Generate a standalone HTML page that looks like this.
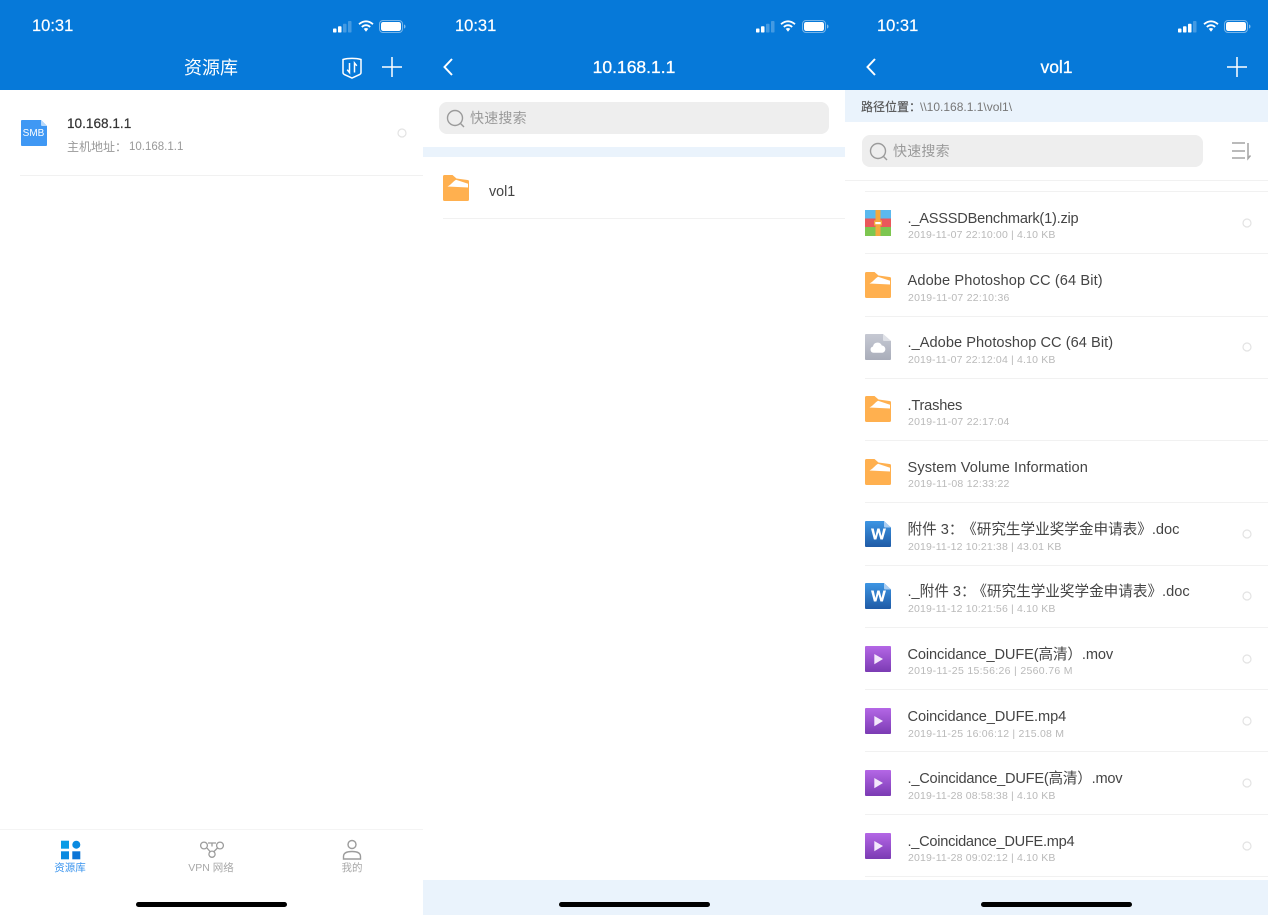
<!DOCTYPE html>
<html><head><meta charset="utf-8">
<style>
html,body{margin:0;padding:0;background:#fff}
#r{position:relative;width:1268px;height:915px;overflow:hidden;background:#fff;font-family:"Liberation Sans","Noto Sans CJK SC",sans-serif}
#r div,#r svg{position:absolute}
.t{white-space:nowrap;line-height:20px;height:20px}
.c{text-align:center}
.hd{color:#fff;font-size:17.5px;-webkit-text-stroke:.3px #fff}
.time{color:#fff;font-size:16.5px;-webkit-text-stroke:.2px #fff}
.f{left:907.5px;font-size:14.6px;color:#444;margin-top:1px}
.m{left:908px;font-size:10.5px;color:#b9b9b9;letter-spacing:.26px;margin-top:1px}
.k{letter-spacing:.17px}
.ln{height:1px;background:#f1f1f1}
.q{font-size:14px;color:#9a9a9a;letter-spacing:.2px}
.hm{width:151px;height:5.5px;border-radius:3px;background:#000;top:901.5px}
</style></head><body>
<div id="r">
<svg width="0" height="0" style="left:0;top:0">
<defs>
<linearGradient id="wg" x1="0" y1="0" x2="0" y2="1"><stop offset="0" stop-color="#3d95e3"/><stop offset="1" stop-color="#1f5ba6"/></linearGradient>
<linearGradient id="vg" x1="0" y1="0" x2="0" y2="1"><stop offset="0" stop-color="#b467e6"/><stop offset="1" stop-color="#7b3bb3"/></linearGradient>
<linearGradient id="cg" x1="0" y1="0" x2="0" y2="1"><stop offset="0" stop-color="#c6c9d3"/><stop offset="1" stop-color="#a9adba"/></linearGradient>
<symbol id="folder" viewBox="0 0 26 26"><path d="M0 1.500A1.500 1.500 0 0 1 1.500 0H9.500L13.500 3.500 24.500 5A1.500 1.500 0 0 1 26 6.500V24.500A1.500 1.500 0 0 1 24.500 26H1.500A1.500 1.500 0 0 1 0 24.500z" fill="#ffb04f"/><path d="M4.500 11.500C8 10 10 6.500 13 4.800L25 8.700V12.500z" fill="#fff"/></symbol>
<symbol id="zip" viewBox="0 0 26 26"><rect width="26" height="9" y="0" fill="#5bb9ee"/><rect width="26" height="9" y="8.500" fill="#e9585b"/><rect width="26" height="9" y="17" fill="#7dc650"/><rect x="10.500" width="5" height="26" fill="#f3a93f"/><rect x="9" y="10.500" width="8" height="5" fill="#f3a93f"/><rect x="10.300" y="12" width="5.400" height="2.200" fill="#fff"/></symbol>
<symbol id="cloud" viewBox="0 0 26 26"><path d="M1 0h17l8 7v18a1 1 0 0 1-1 1H1a1 1 0 0 1-1-1V1a1 1 0 0 1 1-1z" fill="url(#cg)"/><path d="M18 0l8 7h-7a1 1 0 0 1-1-1z" fill="#dfe1e7"/><path d="M8.500 18.800a3.200 3.200 0 0 1-.5-6.300 4.600 4.600 0 0 1 8.800-1 3.700 3.700 0 0 1 .7 7.300z" fill="#fff"/></symbol>
<symbol id="word" viewBox="0 0 26 26"><path d="M1 0h18l7 6.500V25a1 1 0 0 1-1 1H1a1 1 0 0 1-1-1V1a1 1 0 0 1 1-1z" fill="url(#wg)"/><path d="M19 0l7 6.500h-6a1 1 0 0 1-1-1z" fill="#a9cdf2"/><path d="M6 7.500h2.700l1.700 7.500 1.900-7.500h2.300l1.900 7.500 1.800-7.500H21l-3.100 11h-2.500l-2-7.300-2 7.300H8.900z" fill="#fff"/></symbol>
<symbol id="video" viewBox="0 0 26 26"><rect width="26" height="26" rx="1" fill="url(#vg)"/><path d="M9.300 8L18 13 9.300 18.300z" fill="#f3e8fb"/></symbol>
<symbol id="signal2" viewBox="0 0 20 12"><rect x="0" y="7.500" width="3.500" height="4" rx=".8" fill="#fff"/><rect x="5" y="5.200" width="3.500" height="6.300" rx=".8" fill="#fff"/><rect x="10" y="2.800" width="3.500" height="8.700" rx=".8" fill="#fff" opacity=".25"/><rect x="15" y="0" width="3.500" height="11.500" rx=".8" fill="#fff" opacity=".25"/></symbol>
<symbol id="signal3" viewBox="0 0 20 12"><rect x="0" y="7.500" width="3.500" height="4" rx=".8" fill="#fff"/><rect x="5" y="5.200" width="3.500" height="6.300" rx=".8" fill="#fff"/><rect x="10" y="2.800" width="3.500" height="8.700" rx=".8" fill="#fff"/><rect x="15" y="0" width="3.500" height="11.500" rx=".8" fill="#fff" opacity=".25"/></symbol>
<symbol id="wifi" viewBox="0 0 16 12"><path d="M1 4.200Q8-1.500 15 4.200M3.800 7Q8 3.400 12.200 7" fill="none" stroke="#fff" stroke-width="1.800"/><path d="M5.700 8.800Q8 7.200 10.300 8.800L8 11.700z" fill="#fff"/></symbol>
<symbol id="bat" viewBox="0 0 27 13"><rect x=".5" y=".5" width="23" height="12" rx="3.500" fill="none" stroke="#fff" stroke-opacity=".45"/><rect x="2" y="2" width="20" height="9" rx="2.200" fill="#fff"/><path d="M25 4.500c1 .3 1.500 1 1.500 2s-.5 1.700-1.500 2z" fill="#fff" opacity=".5"/></symbol>
<symbol id="plus" viewBox="0 0 22 22"><path d="M11 1v20M1 11h20" stroke="#fff" stroke-width="1.500" fill="none"/></symbol>
<symbol id="back" viewBox="0 0 12 20"><path d="M10 2L2.500 10 10 18" stroke="#fff" stroke-width="2" fill="none"/></symbol>
<symbol id="search" viewBox="0 0 20 20"><circle cx="9" cy="9" r="7.500" fill="none" stroke="#9b9b9b" stroke-width="1.400"/><path d="M14.500 14.500L18 18" stroke="#9b9b9b" stroke-width="1.400"/></symbol>
<symbol id="radio" viewBox="0 0 10 10"><circle cx="5" cy="5" r="4" fill="none" stroke="#e3e3e3" stroke-width="1.200"/></symbol>
</defs>
</svg>

<!-- panel 1 -->
<div style="left:0;top:0;width:423px;height:90px;background:#0679d9"></div>
<div class="t time" style="left:32px;top:16px">10:31</div>
<svg style="left:333px;top:20.500px" width="20" height="12"><use href="#signal2"/></svg>
<svg style="left:357.500px;top:20px" width="16" height="12"><use href="#wifi"/></svg>
<svg style="left:379px;top:19.500px" width="27" height="13"><use href="#bat"/></svg>
<div class="t c" style="left:111px;width:200px;top:58px;color:#fff;font-size:18px;line-height:20px">资源库</div>
<svg style="left:341px;top:57px" width="22" height="22" viewBox="0 0 22 22"><path d="M2 2.500C7 1 15 1 20 2.500V15.500c0 1-.5 1.500-1.200 1.900L11 21 3.200 17.400C2.500 17 2 16.500 2 15.500z" fill="none" stroke="#fff" stroke-width="1.500"/><path d="M8.500 6v9.500l-2.300-2.800M13.500 15.500V6l2.300 2.800" fill="none" stroke="#fff" stroke-width="1.500"/></svg>
<svg style="left:381px;top:56px" width="22" height="22"><use href="#plus"/></svg>
<svg style="left:20.500px;top:120px" width="26" height="26" viewBox="0 0 26 26"><path d="M1 0h19l6 6v19a1 1 0 0 1-1 1H1a1 1 0 0 1-1-1V1a1 1 0 0 1 1-1z" fill="#3f98f4"/><path d="M20 0l6 6h-5a1 1 0 0 1-1-1z" fill="#b7d9fb"/></svg>
<div class="t c" style="left:20.500px;width:26px;top:123.500px;color:#fff;font-size:10px">SMB</div>
<div class="t" style="left:67px;top:114px;font-size:13.600px;color:#333;-webkit-text-stroke:.2px #333">10.168.1.1</div>
<div class="t" style="left:67px;top:137px;font-size:12px;color:#999">主机地址：</div>
<div class="t" style="left:129px;top:137px;font-size:11.500px;color:#999">10.168.1.1</div>
<svg style="left:397px;top:128px" width="10" height="10"><use href="#radio"/></svg>
<div class="ln" style="left:20px;top:175px;width:403px"></div>
<div style="left:0;top:829px;width:423px;height:1px;background:#f4f4f4"></div>
<svg style="left:60px;top:840px" width="22" height="21" viewBox="0 0 22 21"><rect x="1" y=".7" width="8" height="8" fill="#0a9ce6"/><circle cx="16.300" cy="4.700" r="4" fill="#0a8ae0"/><rect x="1" y="11.300" width="8" height="8" fill="#0a8ae0"/><rect x="12.300" y="11.300" width="8" height="8" fill="#0a74d6"/></svg>
<div class="t c" style="left:20px;width:100px;top:858px;font-size:10.500px;color:#3a94ee">资源库</div>
<svg style="left:199px;top:838px" width="26" height="22" viewBox="0 0 26 22" fill="none" stroke="#9c9c9c" stroke-width="1.300"><circle cx="5" cy="7.500" r="3.400"/><circle cx="21" cy="7.500" r="3.400"/><circle cx="13" cy="16.200" r="3.100"/><path d="M9 5h8M13 5v3.500M11 13.500L8 10M15 13.500L18.500 10"/></svg>
<div class="t c" style="left:161px;width:100px;top:858px;font-size:10.500px;color:#a8a8a8">VPN 网络</div>
<svg style="left:342px;top:839px" width="20" height="21" viewBox="0 0 20 21" fill="none" stroke="#9c9c9c" stroke-width="1.400"><circle cx="10" cy="5.500" r="4"/><path d="M1.500 20v-2.500c0-3.500 3.500-5 8.500-5s8.500 1.500 8.500 5V20z"/></svg>
<div class="t c" style="left:302px;width:100px;top:858px;font-size:10.500px;color:#a8a8a8">我的</div>
<div class="hm" style="left:136px"></div>

<!-- panel 2 -->
<div style="left:423px;top:0;width:422px;height:90px;background:#0679d9"></div>
<div class="t time" style="left:455px;top:16px">10:31</div>
<svg style="left:755.500px;top:20.500px" width="20" height="12"><use href="#signal2"/></svg>
<svg style="left:780px;top:20px" width="16" height="12"><use href="#wifi"/></svg>
<svg style="left:801.500px;top:19.500px" width="27" height="13"><use href="#bat"/></svg>
<svg style="left:442px;top:57px" width="12" height="20"><use href="#back"/></svg>
<div class="t c hd" style="left:534px;width:200px;top:57px">10.168.1.1</div>
<div style="left:439px;top:102px;width:390px;height:32px;background:#eeeeee;border-radius:8px"></div>
<svg style="left:446px;top:109px" width="20" height="20"><use href="#search"/></svg>
<div class="t q" style="left:470px;top:108px">快速搜索</div>
<div style="left:423px;top:147px;width:422px;height:10px;background:#eaf3fc"></div>
<svg style="left:443px;top:175px" width="26" height="26"><use href="#folder"/></svg>
<div class="t" style="left:489px;top:182px;font-size:14.300px;color:#444">vol1</div>
<div class="ln" style="left:443px;top:218px;width:402px"></div>
<div style="left:423px;top:880px;width:422px;height:35px;background:#eaf3fc"></div>
<div class="hm" style="left:558.500px"></div>

<!-- panel 3 -->
<div style="left:845px;top:0;width:423px;height:90px;background:#0679d9"></div>
<div class="t time" style="left:877px;top:16px">10:31</div>
<svg style="left:1178px;top:20.500px" width="20" height="12"><use href="#signal3"/></svg>
<svg style="left:1202.500px;top:20px" width="16" height="12"><use href="#wifi"/></svg>
<svg style="left:1224px;top:19.500px" width="27" height="13"><use href="#bat"/></svg>
<svg style="left:865px;top:57px" width="12" height="20"><use href="#back"/></svg>
<div class="t c hd" style="left:956.500px;width:200px;top:57px">vol1</div>
<svg style="left:1226px;top:56px" width="22" height="22"><use href="#plus"/></svg>
<div style="left:845px;top:90px;width:423px;height:32px;background:#eaf3fc"></div>
<div class="t" style="left:861px;top:96.500px;font-size:12px;color:#555;-webkit-text-stroke:.15px #555">路径位置：</div>
<div class="t" style="left:920px;top:96.500px;font-size:12px;color:#777">\\10.168.1.1\vol1\</div>
<div style="left:862px;top:135px;width:341px;height:32px;background:#eeeeee;border-radius:8px"></div>
<svg style="left:868.500px;top:142px" width="20" height="20"><use href="#search"/></svg>
<div class="t q" style="left:893px;top:141px">快速搜索</div>
<svg style="left:1231px;top:141px" width="22" height="20" viewBox="0 0 22 20" fill="none" stroke="#a3a3a3" stroke-width="1.500"><path d="M1 2h13M1 10h13M1 17h13M17 2v15.500l2.500-3"/></svg>
<div class="ln" style="left:845px;top:180px;width:423px"></div>
<div class="ln" style="left:865px;top:191px;width:403px"></div>

<svg style="left:865px;top:210px" width="26" height="26"><use href="#zip"/></svg>
<div class="t f" style="top:207.500px;letter-spacing:-.22px">._ASSSDBenchmark(1).zip</div>
<div class="t m k" style="top:224px">2019-11-07 22:10:00 | 4.10 KB</div>
<svg style="left:1242px;top:218px" width="10" height="10"><use href="#radio"/></svg>
<div class="ln" style="left:865px;top:253px;width:403px"></div>

<svg style="left:865px;top:272px" width="26" height="26"><use href="#folder"/></svg>
<div class="t f" style="top:270px;letter-spacing:.11px">Adobe Photoshop CC (64 Bit)</div>
<div class="t m" style="top:286.500px">2019-11-07 22:10:36</div>
<div class="ln" style="left:865px;top:316px;width:403px"></div>

<svg style="left:865px;top:334px" width="26" height="26"><use href="#cloud"/></svg>
<div class="t f" style="top:332px;letter-spacing:.04px">._Adobe Photoshop CC (64 Bit)</div>
<div class="t m k" style="top:349px">2019-11-07 22:12:04 | 4.10 KB</div>
<svg style="left:1242px;top:342px" width="10" height="10"><use href="#radio"/></svg>
<div class="ln" style="left:865px;top:378px;width:403px"></div>

<svg style="left:865px;top:396px" width="26" height="26"><use href="#folder"/></svg>
<div class="t f" style="top:394.500px;letter-spacing:-.2px">.Trashes</div>
<div class="t m" style="top:411px">2019-11-07 22:17:04</div>
<div class="ln" style="left:865px;top:440px;width:403px"></div>

<svg style="left:865px;top:459px" width="26" height="26"><use href="#folder"/></svg>
<div class="t f" style="top:456.500px;letter-spacing:.08px">System Volume Information</div>
<div class="t m" style="top:473px">2019-11-08 12:33:22</div>
<div class="ln" style="left:865px;top:502px;width:403px"></div>

<svg style="left:865px;top:521px" width="26" height="26"><use href="#word"/></svg>
<div class="t f" style="top:519px">附件 3：<span style="margin-left:6px">《研究生学业奖学金申请表》.doc</span></div>
<div class="t m k" style="top:535.500px">2019-11-12 10:21:38 | 43.01 KB</div>
<svg style="left:1242px;top:529px" width="10" height="10"><use href="#radio"/></svg>
<div class="ln" style="left:865px;top:565px;width:403px"></div>

<svg style="left:865px;top:583px" width="26" height="26"><use href="#word"/></svg>
<div class="t f" style="top:581px">._附件 3：<span style="margin-left:4px">《研究生学业奖学金申请表》.doc</span></div>
<div class="t m k" style="top:597.500px">2019-11-12 10:21:56 | 4.10 KB</div>
<svg style="left:1242px;top:591px" width="10" height="10"><use href="#radio"/></svg>
<div class="ln" style="left:865px;top:627px;width:403px"></div>

<svg style="left:865px;top:645.500px" width="26" height="26"><use href="#video"/></svg>
<div class="t f" style="top:643.500px;letter-spacing:-.12px">Coincidance_DUFE(高清）.mov</div>
<div class="t m" style="top:660px;letter-spacing:.32px">2019-11-25 15:56:26 | 2560.76 M</div>
<svg style="left:1242px;top:653.500px" width="10" height="10"><use href="#radio"/></svg>
<div class="ln" style="left:865px;top:689px;width:403px"></div>

<svg style="left:865px;top:708px" width="26" height="26"><use href="#video"/></svg>
<div class="t f" style="top:706px;letter-spacing:-.1px">Coincidance_DUFE.mp4</div>
<div class="t m" style="top:722.500px;letter-spacing:.24px">2019-11-25 16:06:12 | 215.08 M</div>
<svg style="left:1242px;top:716px" width="10" height="10"><use href="#radio"/></svg>
<div class="ln" style="left:865px;top:751px;width:403px"></div>

<svg style="left:865px;top:770px" width="26" height="26"><use href="#video"/></svg>
<div class="t f" style="top:768px;letter-spacing:-.22px">._Coincidance_DUFE(高清）.mov</div>
<div class="t m k" style="top:785px">2019-11-28 08:58:38 | 4.10 KB</div>
<svg style="left:1242px;top:778px" width="10" height="10"><use href="#radio"/></svg>
<div class="ln" style="left:865px;top:814px;width:403px"></div>

<svg style="left:865px;top:832.500px" width="26" height="26"><use href="#video"/></svg>
<div class="t f" style="top:830.500px;letter-spacing:-.27px">._Coincidance_DUFE.mp4</div>
<div class="t m k" style="top:847px">2019-11-28 09:02:12 | 4.10 KB</div>
<svg style="left:1242px;top:840.500px" width="10" height="10"><use href="#radio"/></svg>
<div class="ln" style="left:865px;top:876px;width:403px"></div>

<div style="left:845px;top:880px;width:423px;height:35px;background:#eaf3fc"></div>
<div class="hm" style="left:981px"></div>
</div>
</body></html>
